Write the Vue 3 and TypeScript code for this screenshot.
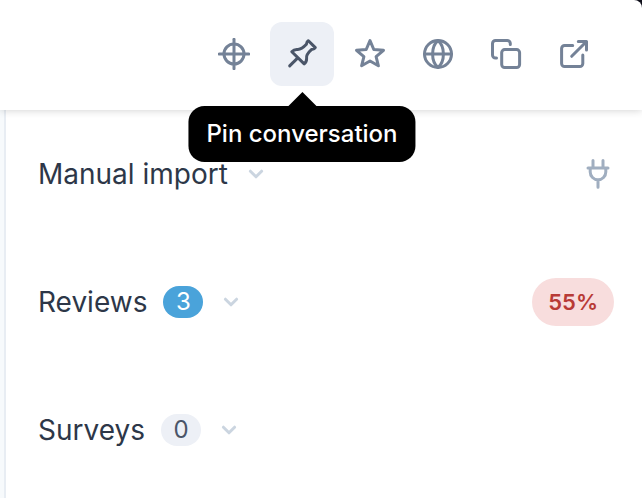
<script setup lang="ts">
import { ref } from 'vue'

interface Action {
  id: string
  label: string
  paths: string[]
}

interface Section {
  title: string
  count?: number
  tone?: 'info' | 'muted'
  score?: string
  plug?: boolean
}

const actions: Action[] = [
  {
    id: 'target',
    label: 'Focus conversation',
    paths: ['M26 16a10 10 0 1 1-20 0a10 10 0 0 1 20 0z', 'M1.3 16H30.7', 'M16 1.3V30.7'],
  },
  {
    id: 'pin',
    label: 'Pin conversation',
    paths: [
      'M22.4 2.7L29.3 9.6Q28.6 11 25.7 11.4Q19.8 16.6 20.6 20.5Q20.7 23.8 18.2 25.9L5.8 13.7Q8 11.2 11.3 11.4Q15.3 11.8 20.4 6.3Q20.8 3.4 22.4 2.7z',
      'M11 20.6L3.7 27.9',
    ],
  },
  {
    id: 'star',
    label: 'Star conversation',
    paths: ['M16 2.6L19.8 11.5L29.5 12.3L22.1 18.7L24.4 27.8L16 23L7.6 27.8L9.9 18.7L2.5 12.3L12.2 11.5z'],
  },
  {
    id: 'globe',
    label: 'Translate',
    paths: [
      'M29.5 16a13.5 13.5 0 1 1-27 0a13.5 13.5 0 0 1 27 0z',
      'M2.5 16H29.5',
      'M16 2.5C8.8 8.5 8.8 23.5 16 29.5C23.2 23.5 23.2 8.5 16 2.5z',
    ],
  },
  {
    id: 'copy',
    label: 'Copy',
    paths: [
      'M14.7 11.6H26.6a3 3 0 0 1 3 3V26.6a3 3 0 0 1-3 3H14.7a3 3 0 0 1-3-3V14.6a3 3 0 0 1 3-3z',
      'M20.3 6.6V5.4a3 3 0 0 0-3-3H5.5a3 3 0 0 0-3 3V17a3 3 0 0 0 3 3H6.5',
    ],
  },
  {
    id: 'open',
    label: 'Open in new window',
    paths: [
      'M14.7 7.5H6.6a3 3 0 0 0-3 3V25.6a3 3 0 0 0 3 3H21.8a3 3 0 0 0 3-3V17',
      'M13.7 18.3L28 4',
      'M20.3 3.6H28.5V11.9',
    ],
  },
]

const active = ref('pin')

const sections: Section[] = [
  { title: 'Manual import', plug: true },
  { title: 'Reviews', count: 3, tone: 'info', score: '55%' },
  { title: 'Surveys', count: 0, tone: 'muted' },
]
</script>

<template>
  <div class="window">
    <header class="toolbar">
      <div v-for="action in actions" :key="action.id" class="action">
        <button
          type="button"
          class="tool"
          :class="{ active: action.id === active }"
          :aria-label="action.label"
          @click="active = action.id"
        >
          <svg class="icon" viewBox="0 0 32 32" aria-hidden="true">
            <path v-for="d in action.paths" :key="d" :d="d" />
          </svg>
        </button>
        <span v-if="action.id === active" class="tooltip" role="tooltip">{{ action.label }}</span>
      </div>
    </header>
    <main class="panel">
      <section v-for="section in sections" :key="section.title" class="row">
        <button type="button" class="toggle">
          <span class="title">{{ section.title }}</span>
          <span v-if="section.count !== undefined" class="badge" :class="section.tone">{{ section.count }}</span>
          <svg class="chevron" viewBox="0 0 24 24" aria-hidden="true">
            <path d="M6.4 9.2L12 14.8L17.6 9.2" />
          </svg>
        </button>
        <svg v-if="section.plug" class="icon plug" viewBox="0 0 32 32" aria-hidden="true">
          <path d="M11 10V2.5M21 10V2.5M6 10H26M8.2 10V14a7.8 7.8 0 0 0 15.6 0V10M16 22V29.3" />
        </svg>
        <span v-if="section.score" class="score">{{ section.score }}</span>
      </section>
    </main>
  </div>
</template>

<style>
body {
  background: #fff;
}
</style>

<style scoped>
.window {
  display: flex;
  flex-direction: column;
  min-height: 100vh;
  background: #10101c;
  font-family: Inter, "Liberation Sans", sans-serif;
  color: #2d3748;
}

button {
  margin: 0;
  padding: 0;
  border: 0;
  background: none;
  font: inherit;
  color: inherit;
  cursor: pointer;
}

.toolbar {
  position: relative;
  z-index: 1;
  display: flex;
  justify-content: flex-end;
  gap: 4px;
  padding: 22px 36px 24px;
  background: #fff;
  border-top-right-radius: 8px;
  box-shadow: 0 0 8px rgba(0, 0, 0, 0.2);
}

.action {
  position: relative;
}

.tool {
  display: flex;
  align-items: center;
  justify-content: center;
  width: 64px;
  height: 64px;
  border-radius: 12px;
  color: #748297;
}

.tool.active {
  background: #edf0f6;
  color: #4a5568;
}

.icon {
  display: block;
  width: 32px;
  height: 32px;
  fill: none;
  stroke: currentColor;
  stroke-width: 3;
  stroke-linecap: round;
  stroke-linejoin: round;
}

.tooltip {
  position: absolute;
  top: 84px;
  left: 50%;
  transform: translateX(-50%);
  padding: 12px 18px;
  border-radius: 16px;
  background: #000;
  color: #fff;
  font-size: 24px;
  font-weight: 500;
  line-height: 32px;
  white-space: nowrap;
}

.tooltip::before {
  content: "";
  position: absolute;
  bottom: 100%;
  left: 50%;
  margin-left: -14px;
  border: 14px solid transparent;
  border-top-width: 0;
  border-bottom-color: #000;
}

.panel {
  flex: 1;
  padding-left: 32px;
  padding-right: 28px;
  border-left: 2px solid #e8edf3;
  margin-left: 4px;
  background: #fff;
  box-shadow: -4px 0 0 #f7fafc;
}

.row {
  display: flex;
  align-items: center;
  justify-content: space-between;
  height: 128px;
}

.toggle {
  display: flex;
  align-items: center;
  gap: 16px;
}

.title {
  font-size: 28px;
  line-height: 40px;
}

.badge {
  min-width: 40px;
  border-radius: 16px;
  font-size: 24px;
  line-height: 32px;
  text-align: center;
}

.badge.info {
  background: #4aa3da;
  color: #fff;
}

.badge.muted {
  background: #edf0f6;
  color: #4a5568;
}

.chevron {
  width: 24px;
  height: 24px;
  fill: none;
  stroke: #cbd5e0;
  stroke-width: 3;
  stroke-linecap: round;
  stroke-linejoin: round;
}

.plug {
  color: #a0aec0;
}

.score {
  padding: 8px 16px;
  border-radius: 24px;
  background: #f8dddd;
  color: #b83a36;
  font-size: 22px;
  font-weight: 600;
  line-height: 32px;
}
</style>
